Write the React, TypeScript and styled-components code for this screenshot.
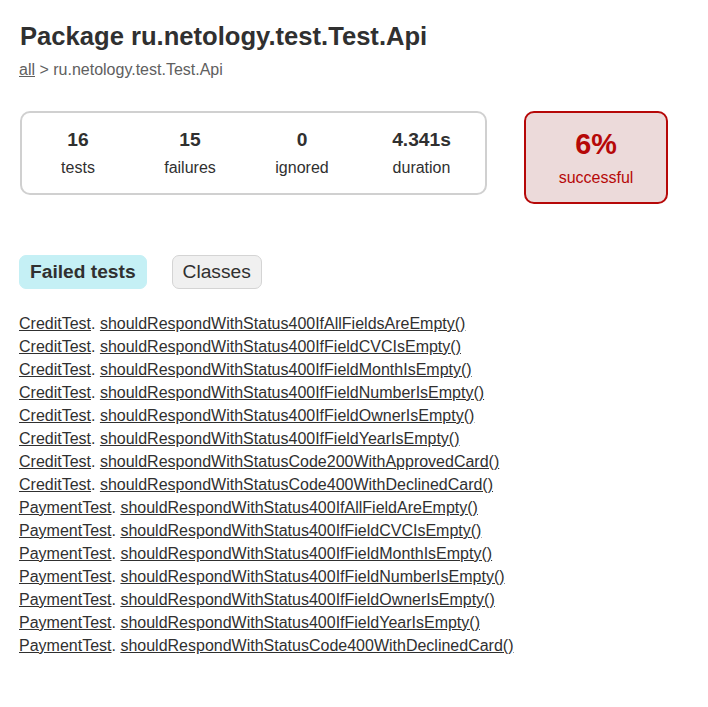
import React from "react";
import styled, { createGlobalStyle } from "styled-components";

type FailedTest = {
  className: string;
  method: string;
};

const failedTests: FailedTest[] = [
  { className: "CreditTest", method: "shouldRespondWithStatus400IfAllFieldsAreEmpty()" },
  { className: "CreditTest", method: "shouldRespondWithStatus400IfFieldCVCIsEmpty()" },
  { className: "CreditTest", method: "shouldRespondWithStatus400IfFieldMonthIsEmpty()" },
  { className: "CreditTest", method: "shouldRespondWithStatus400IfFieldNumberIsEmpty()" },
  { className: "CreditTest", method: "shouldRespondWithStatus400IfFieldOwnerIsEmpty()" },
  { className: "CreditTest", method: "shouldRespondWithStatus400IfFieldYearIsEmpty()" },
  { className: "CreditTest", method: "shouldRespondWithStatusCode200WithApprovedCard()" },
  { className: "CreditTest", method: "shouldRespondWithStatusCode400WithDeclinedCard()" },
  { className: "PaymentTest", method: "shouldRespondWithStatus400IfAllFieldAreEmpty()" },
  { className: "PaymentTest", method: "shouldRespondWithStatus400IfFieldCVCIsEmpty()" },
  { className: "PaymentTest", method: "shouldRespondWithStatus400IfFieldMonthIsEmpty()" },
  { className: "PaymentTest", method: "shouldRespondWithStatus400IfFieldNumberIsEmpty()" },
  { className: "PaymentTest", method: "shouldRespondWithStatus400IfFieldOwnerIsEmpty()" },
  { className: "PaymentTest", method: "shouldRespondWithStatus400IfFieldYearIsEmpty()" },
  { className: "PaymentTest", method: "shouldRespondWithStatusCode400WithDeclinedCard()" }
];

const counters = [
  { value: "16", label: "tests", wide: false },
  { value: "15", label: "failures", wide: false },
  { value: "0", label: "ignored", wide: false },
  { value: "4.341s", label: "duration", wide: true }
];

const GlobalStyle = createGlobalStyle`
  html, body {
    margin: 0;
    padding: 0;
    background: #ffffff;
  }

  body {
    font-family: "Liberation Sans", Arial, sans-serif;
    font-size: 16px;
    line-height: 18px;
    color: #303030;
  }
`;

const Content = styled.div`
  padding: 22px 19px 30px;
`;

const Title = styled.h1`
  margin: 0 0 10px 1px;
  font-size: 25.6px;
  line-height: 29px;
  font-weight: bold;
  white-space: nowrap;
`;

const Breadcrumbs = styled.div`
  color: #606060;

  a {
    color: #606060;
    text-decoration: underline;
  }
`;

const Summary = styled.div`
  display: flex;
  align-items: flex-start;
  gap: 37px;
  margin: 32px 0 41px 1px;
`;

const SummaryGroup = styled.div`
  display: flex;
  border: solid 2px #d0d0d0;
  border-radius: 10px;
`;

const InfoBox = styled.div<{ $wide?: boolean }>`
  width: ${(p) => (p.$wide ? "127px" : "112px")};
  padding: 16px 0;
  text-align: center;
`;

const Counter = styled.div`
  font-size: 19.2px;
  line-height: 22px;
  font-weight: bold;
  margin-bottom: 8px;
`;

const SuccessRate = styled.div`
  width: 140px;
  padding: 15px 0;
  text-align: center;
  border: solid 2px #b60808;
  border-radius: 10px;
  background-color: #ecdada;
  color: #b60808;
`;

const Percent = styled.div`
  font-size: 28.8px;
  line-height: 33px;
  font-weight: bold;
  margin-bottom: 8px;
`;

const TabLinks = styled.ul`
  display: flex;
  gap: 25px;
  margin: 0;
  padding: 10px 0;
  list-style: none;
`;

const Tab = styled.li<{ $selected?: boolean }>`
  padding: 5px 10px;
  border-radius: 7px;
  border: solid 1px ${(p) => (p.$selected ? "#c5f0f5" : "#d4d4d4")};
  background-color: ${(p) => (p.$selected ? "#c5f0f5" : "#f0f0f0")};
  font-size: 19.2px;
  line-height: 22px;
  font-weight: ${(p) => (p.$selected ? "bold" : "normal")};
`;

const LinkList = styled.ul`
  margin: 16px 0 0;
  padding: 0;
  list-style: none;
`;

const LinkItem = styled.li`
  margin-bottom: 5px;
  white-space: nowrap;

  a {
    color: #303030;
    text-decoration: underline;
  }
`;

const App: React.FC = () => {
  return (
    <>
      <GlobalStyle />
      <Content>
        <Title>Package ru.netology.test.Test.Api</Title>
        <Breadcrumbs>
          <a href="#">all</a> &gt; ru.netology.test.Test.Api
        </Breadcrumbs>

        <Summary>
          <SummaryGroup>
            {counters.map((c) => (
              <InfoBox key={c.label} $wide={c.wide}>
                <Counter>{c.value}</Counter>
                <div>{c.label}</div>
              </InfoBox>
            ))}
          </SummaryGroup>
          <SuccessRate>
            <Percent>6%</Percent>
            <div>successful</div>
          </SuccessRate>
        </Summary>

        <TabLinks>
          <Tab $selected>Failed tests</Tab>
          <Tab>Classes</Tab>
        </TabLinks>

        <LinkList>
          {failedTests.map((t) => (
            <LinkItem key={t.className + t.method}>
              <a href="#">{t.className}</a>. <a href="#">{t.method}</a>
            </LinkItem>
          ))}
        </LinkList>
      </Content>
    </>
  );
};

export default App;
